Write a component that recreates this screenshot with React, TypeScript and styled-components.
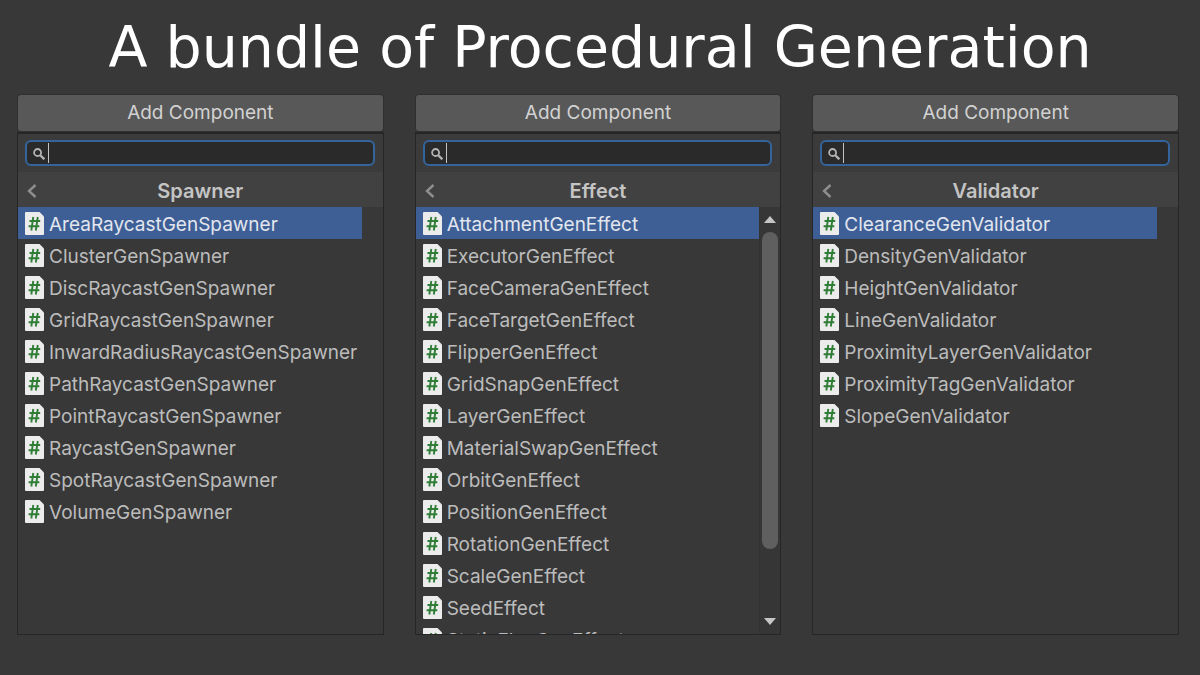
import React from 'react';
import styled, { createGlobalStyle } from 'styled-components';

const GlobalStyle = createGlobalStyle`
  * { box-sizing: border-box; }
  body { margin: 0; background: #383838; }
  button, input { font: inherit; color: inherit; }
`;

const Page = styled.main`
  display: flex;
  flex-direction: column;
  height: 100vh;
  background: #383838;
  color: #c4c4c4;
  font-family: Inter, 'Liberation Sans', sans-serif;
  font-size: 19px;
  line-height: 24px;
`;

const Title = styled.h1`
  flex: none;
  margin: 0;
  padding: 11px 0 12px;
  color: #ffffff;
  font-family: 'DejaVu Sans', sans-serif;
  font-size: 57px;
  font-weight: 400;
  line-height: 72px;
  text-align: center;
  white-space: nowrap;
`;

const Columns = styled.div`
  display: grid;
  grid-template-columns: repeat(3, minmax(0, 1fr));
  gap: 31px;
  flex: 1;
  min-height: 0;
  padding: 0 21px 40px 17px;
`;

const Column = styled.section`
  display: flex;
  flex-direction: column;
  min-height: 0;
`;

const AddButton = styled.button`
  flex: none;
  height: 36px;
  margin: 0 1px 1px;
  padding: 0;
  border: 0;
  border-radius: 3px;
  background: #585858;
  box-shadow: 0 0 0 1px #303030;
  color: #d2d2d2;
`;

const Panel = styled.div`
  display: flex;
  flex-direction: column;
  flex: 1;
  min-height: 0;
  border: 1px solid #262626;
  border-top-width: 2px;
`;

const SearchBar = styled.div`
  flex: none;
  padding: 6px 8px 6px 7px;
  background: #3b3b3b;
`;

const SearchField = styled.label`
  display: flex;
  align-items: center;
  height: 26px;
  padding: 0 6px;
  border: 2px solid #33649c;
  border-radius: 6px;
  background: #2a2a2a;
`;

const Caret = styled.span`
  width: 1px;
  height: 20px;
  margin-left: 3px;
  background: #c4c4c4;
`;

const SearchInput = styled.input`
  flex: 1;
  min-width: 0;
  height: 20px;
  padding: 0;
  border: 0;
  outline: 0;
  background: transparent;
`;

const GroupHeader = styled.header`
  display: grid;
  grid-template-columns: 28px 1fr 28px;
  align-items: center;
  flex: none;
  height: 35px;
  padding-top: 2px;
  background: #414141;
`;

const BackButton = styled.button`
  display: flex;
  justify-content: center;
  padding: 0;
  border: 0;
  background: none;
`;

const GroupName = styled.h2`
  margin: 0;
  font-size: 20px;
  font-weight: 600;
  line-height: 24px;
  text-align: center;
`;

const Body = styled.div`
  display: grid;
  grid-template-columns: minmax(0, 1fr) 21px;
  flex: 1;
  min-height: 0;
`;

const List = styled.ul`
  min-height: 0;
  margin: 0;
  padding: 0;
  overflow: hidden;
  list-style: none;
`;

const Item = styled.button<{ $selected: boolean }>`
  display: flex;
  align-items: flex-start;
  gap: 5px;
  width: 100%;
  height: 32px;
  padding: 5px 0 0 7px;
  border: 0;
  background: ${(p) => (p.$selected ? '#3e5f96' : 'transparent')};
  color: ${(p) => (p.$selected ? '#e2e6ee' : '#bcbcbc')};
  line-height: 26px;
  text-align: left;
  white-space: nowrap;

  svg {
    flex: none;
  }
`;

const ScrollRail = styled.div`
  display: flex;
  flex-direction: column;
  min-height: 0;
  border-left: 1px solid #333333;
  background: #363636;
`;

const ScrollButton = styled.button`
  display: flex;
  align-items: center;
  justify-content: center;
  flex: none;
  height: 25px;
  padding: 0;
  border: 0;
  background: none;
`;

const ScrollTrack = styled.div`
  flex: 1;
  min-height: 0;
  padding: 0 2px;
`;

const ScrollThumb = styled.div`
  height: 84%;
  border-radius: 8px;
  background: #5f5f5f;
`;

const ScriptIcon = () => (
  <svg width="19" height="23" viewBox="0 0 19 23" aria-hidden="true">
    <path d="M1 0H14.500L19 4.500V22Q19 23 18 23H1Q0 23 0 22V1Q0 0 1 0Z" fill="#ececec" />
    <path
      d="M8.300 5L6.300 18.500M12.800 5L10.800 18.500M4.500 9H15.200M3.600 14.300H14.300"
      fill="none"
      stroke="#2f7d36"
      strokeWidth="1.900"
    />
  </svg>
);

const SearchIcon = () => (
  <svg width="12" height="13" viewBox="0 0 12 13" fill="none" stroke="#b4b4b4" aria-hidden="true">
    <circle cx="4.600" cy="5.500" r="3.500" strokeWidth="1.800" />
    <path d="M7.200 8.200L11.300 12.300" strokeWidth="2.300" />
  </svg>
);

const BackIcon = () => (
  <svg width="10" height="14" viewBox="0 0 10 14" fill="none" stroke="#8e8e8e" aria-hidden="true">
    <path d="M8.500 1L2 7L8.500 13" strokeWidth="2.400" />
  </svg>
);

const ArrowIcon = ({ down = false }: { down?: boolean }) => (
  <svg width="12" height="8" viewBox="0 0 12 8" aria-hidden="true">
    <path d={down ? 'M0 0H12L6 7Z' : 'M0 7H12L6 0Z'} fill="#c6c6c6" />
  </svg>
);

interface Group {
  name: string;
  items: string[];
  scrolls?: boolean;
}

const groups: Group[] = [
  {
    name: 'Spawner',
    items: [
      'AreaRaycastGenSpawner',
      'ClusterGenSpawner',
      'DiscRaycastGenSpawner',
      'GridRaycastGenSpawner',
      'InwardRadiusRaycastGenSpawner',
      'PathRaycastGenSpawner',
      'PointRaycastGenSpawner',
      'RaycastGenSpawner',
      'SpotRaycastGenSpawner',
      'VolumeGenSpawner',
    ],
  },
  {
    name: 'Effect',
    scrolls: true,
    items: [
      'AttachmentGenEffect',
      'ExecutorGenEffect',
      'FaceCameraGenEffect',
      'FaceTargetGenEffect',
      'FlipperGenEffect',
      'GridSnapGenEffect',
      'LayerGenEffect',
      'MaterialSwapGenEffect',
      'OrbitGenEffect',
      'PositionGenEffect',
      'RotationGenEffect',
      'ScaleGenEffect',
      'SeedEffect',
      'StaticFlagGenEffect',
    ],
  },
  {
    name: 'Validator',
    items: [
      'ClearanceGenValidator',
      'DensityGenValidator',
      'HeightGenValidator',
      'LineGenValidator',
      'ProximityLayerGenValidator',
      'ProximityTagGenValidator',
      'SlopeGenValidator',
    ],
  },
];

const ComponentMenu = ({ name, items, scrolls }: Group) => (
  <Column>
    <AddButton type="button">Add Component</AddButton>
    <Panel>
      <SearchBar>
        <SearchField>
          <SearchIcon />
          <Caret />
          <SearchInput type="text" aria-label={`Search ${name}`} />
        </SearchField>
      </SearchBar>
      <GroupHeader>
        <BackButton type="button" aria-label="Back">
          <BackIcon />
        </BackButton>
        <GroupName>{name}</GroupName>
      </GroupHeader>
      <Body>
        <List>
          {items.map((item, i) => (
            <li key={item}>
              <Item type="button" $selected={i === 0}>
                <ScriptIcon />
                {item}
              </Item>
            </li>
          ))}
        </List>
        {scrolls && (
          <ScrollRail>
            <ScrollButton type="button" aria-label="Scroll up">
              <ArrowIcon />
            </ScrollButton>
            <ScrollTrack>
              <ScrollThumb />
            </ScrollTrack>
            <ScrollButton type="button" aria-label="Scroll down">
              <ArrowIcon down />
            </ScrollButton>
          </ScrollRail>
        )}
      </Body>
    </Panel>
  </Column>
);

export default function App() {
  return (
    <>
      <GlobalStyle />
      <Page>
        <Title>A bundle of Procedural Generation</Title>
        <Columns>
          {groups.map((group) => (
            <ComponentMenu key={group.name} {...group} />
          ))}
        </Columns>
      </Page>
    </>
  );
}
